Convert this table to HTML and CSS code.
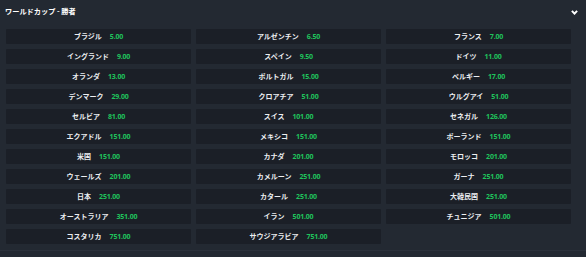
FILE: index.html
```html
<!DOCTYPE html>
<html lang="ja">
<head>
<meta charset="utf-8">
<link rel="stylesheet" href="styles.css">
</head>
<body>
<div class="market">
  <div class="market-head">
    <span class="title">ワールドカップ - 勝者</span>
    <svg class="chev" width="7" height="5" viewBox="0 0 7 5"><path d="M0.9 0.9 L3.5 3.6 L6.1 0.9" fill="none" stroke="#ffffff" stroke-width="2"/></svg>
  </div>
  <div class="grid">
    <div class="cell"><span class="name">ブラジル</span><span class="odds">5.00</span></div>
    <div class="cell"><span class="name">アルゼンチン</span><span class="odds">6.50</span></div>
    <div class="cell"><span class="name">フランス</span><span class="odds">7.00</span></div>
    <div class="cell"><span class="name">イングランド</span><span class="odds">9.00</span></div>
    <div class="cell"><span class="name">スペイン</span><span class="odds">9.50</span></div>
    <div class="cell"><span class="name">ドイツ</span><span class="odds">11.00</span></div>
    <div class="cell"><span class="name">オランダ</span><span class="odds">13.00</span></div>
    <div class="cell"><span class="name">ポルトガル</span><span class="odds">15.00</span></div>
    <div class="cell"><span class="name">ベルギー</span><span class="odds">17.00</span></div>
    <div class="cell"><span class="name">デンマーク</span><span class="odds">29.00</span></div>
    <div class="cell"><span class="name">クロアチア</span><span class="odds">51.00</span></div>
    <div class="cell"><span class="name">ウルグアイ</span><span class="odds">51.00</span></div>
    <div class="cell"><span class="name">セルビア</span><span class="odds">81.00</span></div>
    <div class="cell"><span class="name">スイス</span><span class="odds">101.00</span></div>
    <div class="cell"><span class="name">セネガル</span><span class="odds">126.00</span></div>
    <div class="cell"><span class="name">エクアドル</span><span class="odds">151.00</span></div>
    <div class="cell"><span class="name">メキシコ</span><span class="odds">151.00</span></div>
    <div class="cell"><span class="name">ポーランド</span><span class="odds">151.00</span></div>
    <div class="cell"><span class="name">米国</span><span class="odds">151.00</span></div>
    <div class="cell"><span class="name">カナダ</span><span class="odds">201.00</span></div>
    <div class="cell"><span class="name">モロッコ</span><span class="odds">201.00</span></div>
    <div class="cell"><span class="name">ウェールズ</span><span class="odds">201.00</span></div>
    <div class="cell"><span class="name">カメルーン</span><span class="odds">251.00</span></div>
    <div class="cell"><span class="name">ガーナ</span><span class="odds">251.00</span></div>
    <div class="cell"><span class="name">日本</span><span class="odds">251.00</span></div>
    <div class="cell"><span class="name">カタール</span><span class="odds">251.00</span></div>
    <div class="cell"><span class="name">大韓民国</span><span class="odds">251.00</span></div>
    <div class="cell"><span class="name">オーストラリア</span><span class="odds">351.00</span></div>
    <div class="cell"><span class="name">イラン</span><span class="odds">501.00</span></div>
    <div class="cell"><span class="name">チュニジア</span><span class="odds">501.00</span></div>
    <div class="cell"><span class="name">コスタリカ</span><span class="odds">751.00</span></div>
    <div class="cell"><span class="name">サウジアラビア</span><span class="odds">751.00</span></div>
  </div>
</div>
</body>
</html>
```

FILE: styles.css
```css
html, body {
  margin: 0;
  padding: 0;
  background: #232932;
  height: 257px;
  overflow: hidden;
}
.market {
  font-family: "Noto Sans CJK JP", "Noto Sans", sans-serif;
  font-weight: 700;
  height: 251px;
  border-bottom: 1px solid #2b313b;
  box-sizing: border-box;
}
.market-head {
  height: 24px;
  display: flex;
  align-items: center;
  justify-content: space-between;
  padding: 0 8px 0 5px;
}
.title {
  color: #ffffff;
  font-size: 7.2px;
  line-height: 1;
}
.chev {
  display: block;
  margin-top: 1px;
}
.grid {
  margin-top: 5px;
  margin-left: 6px;
  width: 565px;
  display: grid;
  grid-template-columns: repeat(3, 185px);
  grid-auto-rows: 15px;
  column-gap: 5px;
  row-gap: 5px;
}
.cell {
  background: #1b1f27;
  border-radius: 1px;
  display: flex;
  align-items: center;
  justify-content: center;
  gap: 8px;
}
.name {
  color: #eceef1;
  font-size: 7px;
  line-height: 1;
}
.odds {
  color: #1fc45c;
  font-size: 7px;
  line-height: 1;
  font-family: "Open Sans", "Noto Sans", sans-serif;
  font-weight: 700;
  letter-spacing: -0.2px;
}
```
